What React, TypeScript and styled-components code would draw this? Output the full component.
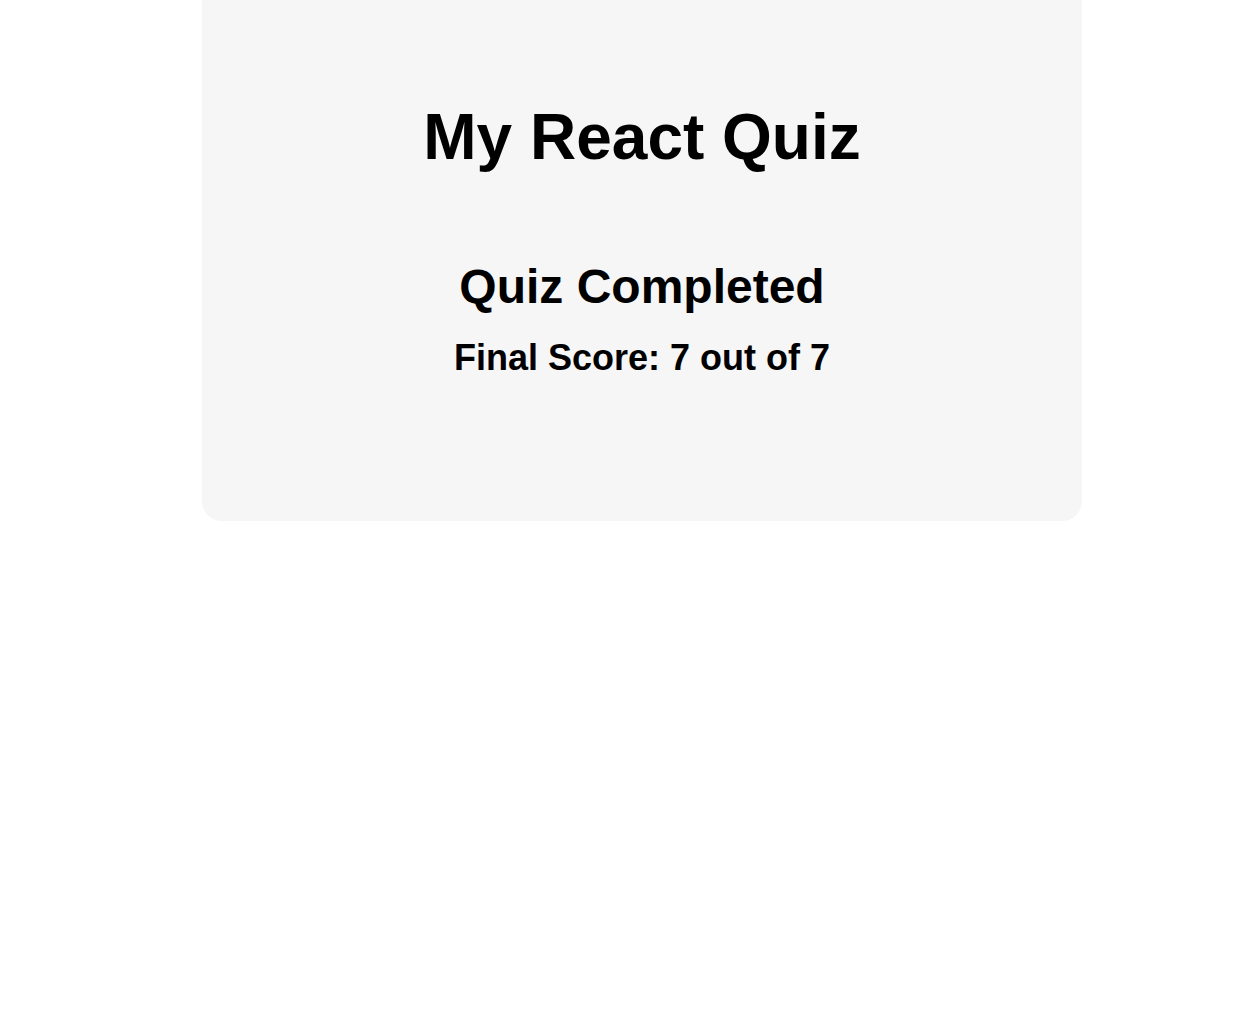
import React from "react";
import styled, { createGlobalStyle } from "styled-components";

const Global = createGlobalStyle`
  html, body { margin: 0; padding: 0; background: #ffffff; }
  body { font-family: "Liberation Sans", Arial, sans-serif; color: #000; }
`;

const Page = styled.main`
  display: flex;
  justify-content: center;
  padding-left: 26px;
  min-height: 1034px;
  box-sizing: border-box;
`;

const Card = styled.section`
  width: 880px;
  box-sizing: border-box;
  background: #f6f6f6;
  border-radius: 0 0 20px 20px;
  padding: 101px 40px 143px;
  display: flex;
  flex-direction: column;
  align-items: center;
  text-align: center;
  align-self: flex-start;
`;

const Title = styled.h1`
  margin: 0 0 84px;
  font-size: 64px;
  font-weight: 700;
  line-height: 1.15;
`;

const Heading = styled.h2`
  margin: 0 0 23px;
  font-size: 48px;
  font-weight: 700;
  line-height: 1.15;
`;

const Score = styled.h3`
  margin: 0;
  font-size: 36px;
  font-weight: 700;
  line-height: 1.15;
`;

export default function App() {
  return (
    <>
      <Global />
      <Page>
        <Card>
          <Title>My React Quiz</Title>
          <Heading>Quiz Completed</Heading>
          <Score>Final Score: 7 out of 7</Score>
        </Card>
      </Page>
    </>
  );
}
